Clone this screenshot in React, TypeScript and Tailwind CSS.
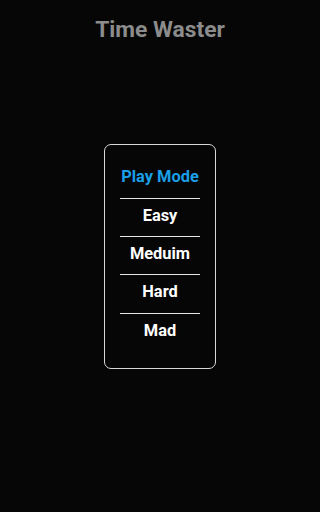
const LEVELS = ['Easy', 'Meduim', 'Hard', 'Mad'];

export default function App() {
  return (
    <div
      className="flex h-[512px] w-full flex-col items-center bg-[#060606]"
      style={{ fontFamily: 'Roboto, "Noto Sans", sans-serif' }}
    >
      <h1 className="pt-[16.5px] text-[22.8px] leading-[26px] font-bold text-[#8c8c8c]">Time Waster</h1>

      <div className="mt-[101.5px] flex w-[112px] flex-col items-center rounded-[7px] border border-[#d8d8d8] pt-[22.4px] pb-[17px]">
        <p className="mb-[11.3px] text-[16.4px] leading-[19px] font-bold text-[#1b9fe6]">Play Mode</p>
        {LEVELS.map((level) => (
          <div key={level} className="flex flex-col items-center">
            <div className="h-px w-[80px] bg-[#e6e6e6]" />
            <button className="mt-[7px] mb-[11.3px] text-[16.4px] leading-[19px] font-bold text-white">
              {level}
            </button>
          </div>
        ))}
      </div>
    </div>
  );
}
